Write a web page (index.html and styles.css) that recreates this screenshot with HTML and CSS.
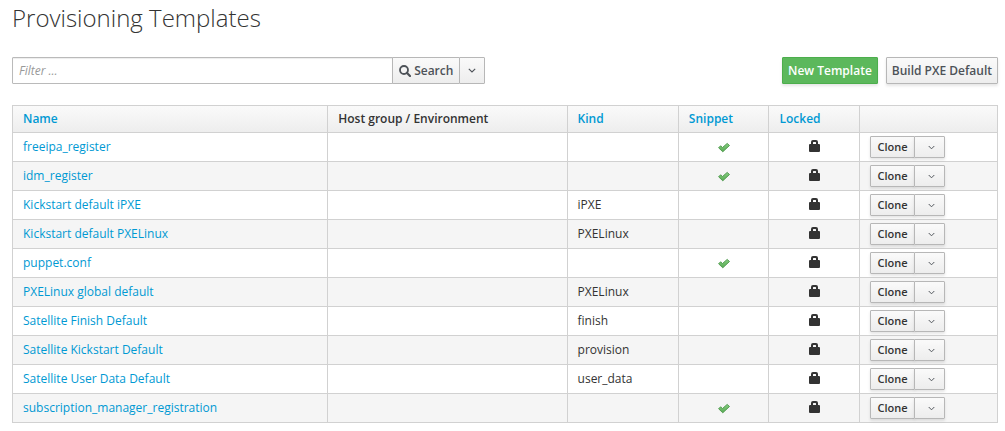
FILE: index.html
```html
<!DOCTYPE html>
<html lang="en">
<head>
<meta charset="utf-8">
<title>Provisioning Templates</title>
<link rel="stylesheet" href="styles.css">
</head>
<body>
<svg class="sprite" aria-hidden="true">
  <defs>
    <linearGradient id="tick-fill" x1="0" y1="0" x2="0" y2="1">
      <stop offset="0" stop-color="#86cc80"/>
      <stop offset="1" stop-color="#58ab54"/>
    </linearGradient>
    <symbol id="tick" viewBox="0 0 12 12">
      <path d="M.6 6.800 2.600 4.800 4.500 6.500 9.200 2.400 11.500 4.500 4.800 10.800Z" fill="url(#tick-fill)" stroke="#4a9648" stroke-width=".9" stroke-linejoin="round"/>
    </symbol>
    <symbol id="lock" viewBox="0 0 11 14">
      <path fill-rule="evenodd" d="M2 4V2Q2 0 4 0H7Q9 0 9 2V4H10Q11 4 11 5V11Q11 12 10 12H1Q0 12 0 11V5Q0 4 1 4ZM4 4H7V2.500Q7 2 6.500 2H4.500Q4 2 4 2.500Z" fill="#333"/>
    </symbol>
    <symbol id="chevron" viewBox="0 0 8 5">
      <path d="M.8.8 4 4 7.200.8" fill="none" stroke="currentColor" stroke-width="1.100"/>
    </symbol>
    <symbol id="magnifier" viewBox="0 0 12 12">
      <circle cx="5" cy="5" r="4" fill="none" stroke="currentColor" stroke-width="1.800"/>
      <path d="M7.800 7.800 11 11" stroke="currentColor" stroke-width="2.200" stroke-linecap="round"/>
    </symbol>
  </defs>
</svg>
<main class="page">
  <h1 class="title">Provisioning Templates</h1>
  <div class="toolbar">
    <form class="search" role="search">
      <input class="search-input" type="text" placeholder="Filter ..." aria-label="Filter">
      <button class="btn search-btn" type="button"><svg class="magnifier"><use href="#magnifier"/></svg>Search</button>
      <button class="btn search-menu" type="button" aria-label="Search options"><svg class="chevron"><use href="#chevron"/></svg></button>
    </form>
    <div class="actions">
      <button class="btn btn-success" type="button">New Template</button>
      <button class="btn" type="button">Build PXE Default</button>
    </div>
  </div>
  <table class="templates">
    <colgroup><col class="col-name"><col class="col-host"><col class="col-kind"><col class="col-snippet"><col class="col-locked"><col class="col-actions"></colgroup>
    <thead>
      <tr><th><a href="#">Name</a></th><th>Host group / Environment</th><th><a href="#">Kind</a></th><th><a href="#">Snippet</a></th><th><a href="#">Locked</a></th><th></th></tr>
    </thead>
    <tbody>
      <tr><td><a href="#">freeipa_register</a></td><td></td><td></td><td class="mark"><svg class="tick"><use href="#tick"/></svg></td><td class="mark"><svg class="lock"><use href="#lock"/></svg></td><td class="row-actions"><div class="split"><button class="btn btn-small" type="button">Clone</button><button class="btn btn-more" type="button" aria-label="More actions"><svg class="chevron-small"><use href="#chevron"/></svg></button></div></td></tr>
      <tr><td><a href="#">idm_register</a></td><td></td><td></td><td class="mark"><svg class="tick"><use href="#tick"/></svg></td><td class="mark"><svg class="lock"><use href="#lock"/></svg></td><td class="row-actions"><div class="split"><button class="btn btn-small" type="button">Clone</button><button class="btn btn-more" type="button" aria-label="More actions"><svg class="chevron-small"><use href="#chevron"/></svg></button></div></td></tr>
      <tr><td><a href="#">Kickstart default iPXE</a></td><td></td><td>iPXE</td><td></td><td class="mark"><svg class="lock"><use href="#lock"/></svg></td><td class="row-actions"><div class="split"><button class="btn btn-small" type="button">Clone</button><button class="btn btn-more" type="button" aria-label="More actions"><svg class="chevron-small"><use href="#chevron"/></svg></button></div></td></tr>
      <tr><td><a href="#">Kickstart default PXELinux</a></td><td></td><td>PXELinux</td><td></td><td class="mark"><svg class="lock"><use href="#lock"/></svg></td><td class="row-actions"><div class="split"><button class="btn btn-small" type="button">Clone</button><button class="btn btn-more" type="button" aria-label="More actions"><svg class="chevron-small"><use href="#chevron"/></svg></button></div></td></tr>
      <tr><td><a href="#">puppet.conf</a></td><td></td><td></td><td class="mark"><svg class="tick"><use href="#tick"/></svg></td><td class="mark"><svg class="lock"><use href="#lock"/></svg></td><td class="row-actions"><div class="split"><button class="btn btn-small" type="button">Clone</button><button class="btn btn-more" type="button" aria-label="More actions"><svg class="chevron-small"><use href="#chevron"/></svg></button></div></td></tr>
      <tr><td><a href="#">PXELinux global default</a></td><td></td><td>PXELinux</td><td></td><td class="mark"><svg class="lock"><use href="#lock"/></svg></td><td class="row-actions"><div class="split"><button class="btn btn-small" type="button">Clone</button><button class="btn btn-more" type="button" aria-label="More actions"><svg class="chevron-small"><use href="#chevron"/></svg></button></div></td></tr>
      <tr><td><a href="#">Satellite Finish Default</a></td><td></td><td>finish</td><td></td><td class="mark"><svg class="lock"><use href="#lock"/></svg></td><td class="row-actions"><div class="split"><button class="btn btn-small" type="button">Clone</button><button class="btn btn-more" type="button" aria-label="More actions"><svg class="chevron-small"><use href="#chevron"/></svg></button></div></td></tr>
      <tr><td><a href="#">Satellite Kickstart Default</a></td><td></td><td>provision</td><td></td><td class="mark"><svg class="lock"><use href="#lock"/></svg></td><td class="row-actions"><div class="split"><button class="btn btn-small" type="button">Clone</button><button class="btn btn-more" type="button" aria-label="More actions"><svg class="chevron-small"><use href="#chevron"/></svg></button></div></td></tr>
      <tr><td><a href="#">Satellite User Data Default</a></td><td></td><td>user_data</td><td></td><td class="mark"><svg class="lock"><use href="#lock"/></svg></td><td class="row-actions"><div class="split"><button class="btn btn-small" type="button">Clone</button><button class="btn btn-more" type="button" aria-label="More actions"><svg class="chevron-small"><use href="#chevron"/></svg></button></div></td></tr>
      <tr><td><a href="#">subscription_manager_registration</a></td><td></td><td></td><td class="mark"><svg class="tick"><use href="#tick"/></svg></td><td class="mark"><svg class="lock"><use href="#lock"/></svg></td><td class="row-actions"><div class="split"><button class="btn btn-small" type="button">Clone</button><button class="btn btn-more" type="button" aria-label="More actions"><svg class="chevron-small"><use href="#chevron"/></svg></button></div></td></tr>
    </tbody>
  </table>
</main>
</body>
</html>
```

FILE: styles.css
```css
* { box-sizing: border-box; }
body {
  margin: 0;
  background: #fff;
  color: #333;
  font: 12px/20px "Open Sans", sans-serif;
}
a { color: #0099d3; text-decoration: none; }
svg { display: block; flex: none; }
.sprite { position: absolute; width: 0; height: 0; }
.page { padding: 4px 7px 8px 12px; }
.title { margin: 0 0 25px; font-size: 24px; line-height: 28px; font-weight: 300; }
.toolbar { display: flex; justify-content: space-between; margin-bottom: 21px; }
.search { display: flex; width: 48%; }
.actions { display: flex; gap: 8px; }
.search-input {
  flex: 1;
  min-width: 0;
  height: 27px;
  padding: 0 6px;
  border: 1px solid #bababa;
  border-radius: 1px 0 0 1px;
  box-shadow: inset 0 1px 1px rgba(0, 0, 0, .075);
  font: inherit;
}
.search-input::placeholder { color: #999; font-style: italic; opacity: 1; }
.btn {
  display: flex;
  align-items: center;
  justify-content: center;
  height: 27px;
  padding: 0 5px;
  border: 1px solid #b7b7b7;
  border-radius: 1px;
  background: linear-gradient(#fafafa, #ededed);
  box-shadow: 0 2px 3px rgba(0, 0, 0, .1);
  color: #4d5258;
  font: 600 12px/20px "Open Sans", sans-serif;
  white-space: nowrap;
}
.search .btn { margin-left: -1px; box-shadow: none; }
.search-btn { width: 68px; gap: 3px; }
.search-menu { width: 26px; }
.btn-success { border-color: #4cae4c; background: #5cb85c; color: #fff; }
.magnifier { width: 12px; height: 12px; }
.chevron { width: 8px; height: 5px; }
.chevron-small { width: 7px; height: 5px; }
.templates { width: 100%; border-collapse: collapse; table-layout: fixed; }
.templates th, .templates td { border: 1px solid #d1d1d1; text-align: left; }
.templates th { height: 27px; padding: 0 10px; font-weight: 600; }
.templates td { height: 29px; padding: 0 10px; }
.templates thead tr { background: linear-gradient(#fafafa, #ededed); }
.templates tbody tr:nth-child(even) { background: #f5f5f5; }
.col-name { width: 32%; }
.col-host { width: 24.3%; }
.col-kind { width: 11.3%; }
.col-snippet { width: 9.2%; }
.col-locked { width: 9.2%; }
.col-actions { width: 14%; }
.mark svg { margin: 0 auto; }
.tick { width: 12px; height: 12px; }
.lock { width: 11px; height: 14px; }
.split { display: flex; }
.split .btn { height: 22px; color: #333; font-size: 11px; }
.split .btn-small { width: 45px; }
.split .btn-more { width: 31px; margin-left: -1px; padding: 0 5px 0 8px; color: #4d5258; }
```
